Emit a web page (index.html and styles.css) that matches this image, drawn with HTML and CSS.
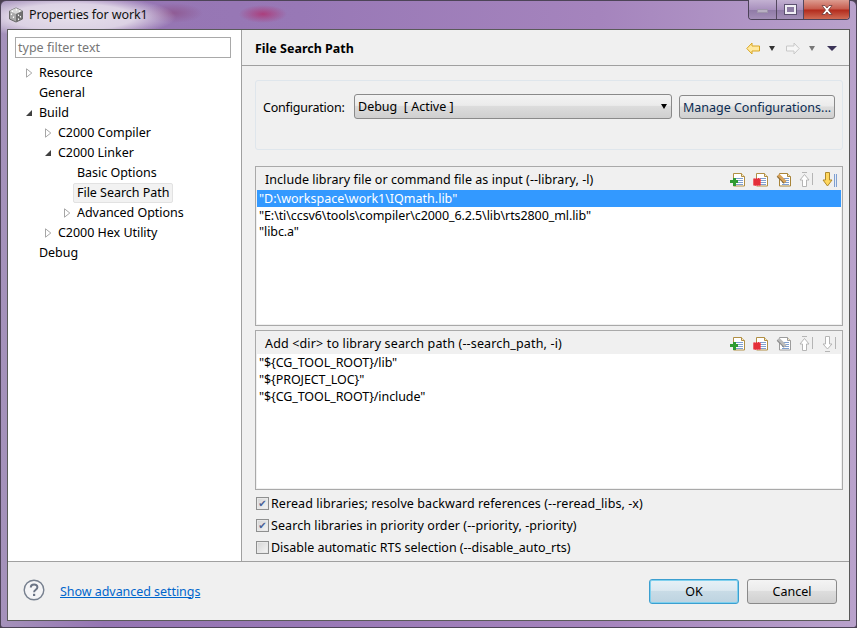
FILE: index.html
```html
<!DOCTYPE html>
<html lang="en">
<head>
<meta charset="utf-8">
<title>Properties for work1</title>
<link rel="stylesheet" href="styles.css">
</head>
<body>
<svg class="defs" width="0" height="0" aria-hidden="true">
  <symbol id="page" viewBox="0 0 16 16">
    <path d="M3.500 2.500h8l3 3v9.500h-11z" fill="#fff" stroke="currentColor"/>
    <path d="M11.500 2.500v3h3" fill="#f6e9c8" stroke="currentColor"/>
    <path d="M6 7.500h7M6 9.500h7M6 11.500h7M6 13.500h7" stroke="#7f9fd0"/>
  </symbol>
  <symbol id="tri-closed" viewBox="0 0 8 10">
    <path d="M1.500 .8v8.400L6.800 5z" fill="#fff" stroke="#a6a6a6"/>
  </symbol>
  <symbol id="tri-open" viewBox="0 0 8 10">
    <path d="M7 2v6H1z" fill="#404040"/>
  </symbol>
  <symbol id="arrow-up" viewBox="0 0 12 17">
    <path d="M3 1.500h5" stroke="#b5b5b5"/>
    <path d="M5.500 3.500 1 9h2.500v6.500h4V9H10z" fill="#fff" stroke="#b5b5b5"/>
  </symbol>
  <symbol id="arrow-down" viewBox="0 0 12 17">
    <path d="M3.500 1.500h4V9H10l-4.500 6L1 9h2.500z" fill="currentColor" stroke="#b08a2c"/>
  </symbol>
  <symbol id="arrow-down-off" viewBox="0 0 12 17">
    <path d="M3.500 1.500h4V9H10l-4.500 5L1 9h2.500z" fill="#fff" stroke="#b5b5b5"/>
    <path d="M3 16.500h5" stroke="#b5b5b5"/>
  </symbol>
</svg>

<div class="window">
  <header class="titlebar">
    <svg class="app-icon" width="16" height="16" viewBox="0 0 16 16">
      <path d="M8 1 14.500 4v8L8 15 1.500 12V4z" fill="#a8a8a8" stroke="#666"/>
      <path d="M1.500 4 8 7l6.500-3L8 1z" fill="#d8d8d8"/>
      <path d="M8 7v8l6.500-3V4z" fill="#6f6f6f"/>
      <path d="M4 4l1 .5M8 2.500l1 .5M11 4l1 .5M3 7l1 .5M5 10l1 .5M10 8.500l1-.5M12 10l1-.5M10 12.500l1-.5" stroke="#fff" stroke-width="1.500"/>
    </svg>
    <span class="title-text">Properties for work1</span>
    <div class="win-controls">
      <span class="wc wc-min"><i class="min-glyph"></i></span>
      <span class="wc wc-max"><i class="max-glyph"></i></span>
      <span class="wc wc-close">
        <svg width="16" height="12" viewBox="0 0 16 12"><path d="M3 1.500h3l2 2.500 2-2.500h3L9.500 6 13 10.500h-3L8 8l-2 2.500H3L6.500 6z" fill="#fff" stroke="#6b3b3b" stroke-width=".8"/></svg>
      </span>
    </div>
  </header>

  <div class="client">
    <div class="main">
      <nav class="nav">
        <div class="filter">type filter text</div>
        <ul class="tree">
          <li class="row d0"><svg class="tw"><use href="#tri-closed"/></svg><span class="node">Resource</span></li>
          <li class="row d0"><span class="tw"></span><span class="node">General</span></li>
          <li class="row d0"><svg class="tw"><use href="#tri-open"/></svg><span class="node">Build</span></li>
          <li class="row d1"><svg class="tw"><use href="#tri-closed"/></svg><span class="node">C2000 Compiler</span></li>
          <li class="row d1"><svg class="tw"><use href="#tri-open"/></svg><span class="node">C2000 Linker</span></li>
          <li class="row d2"><span class="tw"></span><span class="node">Basic Options</span></li>
          <li class="row d2"><span class="tw"></span><span class="node node-selected">File Search Path</span></li>
          <li class="row d2"><svg class="tw"><use href="#tri-closed"/></svg><span class="node">Advanced Options</span></li>
          <li class="row d1"><svg class="tw"><use href="#tri-closed"/></svg><span class="node">C2000 Hex Utility</span></li>
          <li class="row d0"><span class="tw"></span><span class="node">Debug</span></li>
        </ul>
      </nav>

      <section class="content">
        <div class="page-head">
          <h1 class="page-title">File Search Path</h1>
          <div class="page-nav">
            <svg class="nav-arrow" width="14" height="13" viewBox="0 0 14 13"><path d="M.8 6.500 6 1v3h7.500v5H6v3z" fill="#ffe9a0" stroke="#d9a520"/></svg>
            <i class="caret caret-dark"></i>
            <svg class="nav-arrow nav-fwd" width="14" height="13" viewBox="0 0 14 13"><path d="M13.200 6.500 8 1v3H.5v5H8v3z" fill="#f6f6f6" stroke="#c8c8c8"/></svg>
            <i class="caret caret-grey"></i>
            <i class="caret caret-menu"></i>
          </div>
        </div>

        <div class="page-body">
          <div class="config">
            <span class="config-label">Configuration:</span>
            <div class="combo"><span class="combo-value">Debug&nbsp;&nbsp;[ Active ]</span><i class="caret caret-black"></i></div>
            <button class="btn btn-manage" type="button">Manage Configurations...</button>
          </div>

          <div class="panel">
            <div class="panel-head">
              <span class="panel-title">Include library file or command file as input (--library, -l)</span>
              <div class="tools">
                <span class="tool tool-add"><svg><use href="#page"/></svg><b class="plus"></b></span>
                <span class="tool tool-del"><svg><use href="#page"/></svg><b class="cross"></b></span>
                <span class="tool tool-edit"><svg><use href="#page"/></svg><b class="pencil"></b></span>
                <span class="tool tool-updis"><svg><use href="#arrow-up"/></svg><b class="sep"></b></span>
                <span class="tool tool-down"><svg><use href="#arrow-down"/></svg><b class="sep sep-lines"></b></span>
              </div>
            </div>
            <ul class="list">
              <li class="item item-selected">"D:\workspace\work1\IQmath.lib"</li>
              <li class="item">"E:\ti\ccsv6\tools\compiler\c2000_6.2.5\lib\rts2800_ml.lib"</li>
              <li class="item">"libc.a"</li>
            </ul>
          </div>

          <div class="panel panel-second">
            <div class="panel-head">
              <span class="panel-title">Add &lt;dir&gt; to library search path (--search_path, -i)</span>
              <div class="tools">
                <span class="tool tool-add"><svg><use href="#page"/></svg><b class="plus"></b></span>
                <span class="tool tool-del"><svg><use href="#page"/></svg><b class="cross"></b></span>
                <span class="tool tool-off"><svg><use href="#page"/></svg><b class="pencil pencil-off"></b></span>
                <span class="tool tool-updis"><svg><use href="#arrow-up"/></svg><b class="sep"></b></span>
                <span class="tool tool-downdis"><svg><use href="#arrow-down-off"/></svg><b class="sep"></b></span>
              </div>
            </div>
            <ul class="list">
              <li class="item">"${CG_TOOL_ROOT}/lib"</li>
              <li class="item">"${PROJECT_LOC}"</li>
              <li class="item">"${CG_TOOL_ROOT}/include"</li>
            </ul>
          </div>

          <div class="checks">
            <label class="check"><span class="box box-on">✔</span>Reread libraries; resolve backward references (--reread_libs, -x)</label>
            <label class="check"><span class="box box-on">✔</span>Search libraries in priority order (--priority, -priority)</label>
            <label class="check check-tight"><span class="box"></span>Disable automatic RTS selection (--disable_auto_rts)</label>
          </div>
        </div>
      </section>
    </div>

    <footer class="footer">
      <svg class="help" width="22" height="22" viewBox="0 0 22 22">
        <circle cx="11" cy="11" r="9.800" fill="#f4f4f6" stroke="#77808f" stroke-width="1.400"/>
        <path d="M7.800 8.500c0-4 6.600-4 6.600-.2 0 2.600-3.300 2.400-3.300 5" fill="none" stroke="#6b7485" stroke-width="2"/>
        <rect x="10" y="14.800" width="2.200" height="2.200" fill="#6b7485"/>
      </svg>
      <a class="advanced" href="#">Show advanced settings</a>
      <div class="footer-buttons">
        <button class="btn btn-foot btn-default" type="button">OK</button>
        <button class="btn btn-foot" type="button">Cancel</button>
      </div>
    </footer>
  </div>
</div>
</body>
</html>
```

FILE: styles.css
```css
* { box-sizing: border-box; }
html, body { margin: 0; padding: 0; }
body {
  width: 857px;
  height: 628px;
  overflow: hidden;
  font: 12.5px/17px "Noto Sans", "Open Sans", sans-serif;
  color: #000;
  background: #4a4050;
}
.defs { position: absolute; }
ul { list-style: none; margin: 0; padding: 0; }

.window {
  width: 857px;
  height: 628px;
  padding: 0 6px 6px;
  display: flex;
  flex-direction: column;
  border-radius: 6px 6px 3px 3px;
  border: 1px solid #4d4458;
  background:
    radial-gradient(ellipse 105px 22px at 70px 16px, #e6dfeb 0%, #dcd2e4 60%, rgba(220,210,228,0) 100%),
    radial-gradient(ellipse 24px 9px at 262px 13px, #ab3f7d 0%, rgba(171,63,125,0) 100%),
    radial-gradient(ellipse 30px 10px at 172px 12px, #8f5b94 0%, rgba(143,91,148,0) 100%),
    linear-gradient(90deg, #a592bb 0%, #9575b3 12%, #9878b6 35%, #a584bd 70%, #b9a2cc 100%);
}

.titlebar {
  height: 28px;
  display: flex;
  align-items: flex-start;
  flex: none;
}
.app-icon { margin: 6px 0 0 1px; flex: none; }
.title-text { margin: 5px 0 0 5px; font-size: 12.5px; line-height: 17px; color: #111; letter-spacing: -.1px; }
.win-controls {
  margin-left: auto;
  display: flex;
  height: 20px;
  margin-top: -1px;
  border: 1px solid #4c4258;
  border-top: 0;
  border-radius: 0 0 4px 4px;
  overflow: hidden;
}
.wc { display: flex; align-items: center; justify-content: center; border-right: 1px solid #54485f; }
.wc-min { width: 28px; background: linear-gradient(#c3b1d2, #a890bd 50%, #8f7aa6 52%, #a48fb8); }
.wc-max { width: 27px; background: linear-gradient(#c3b1d2, #a890bd 50%, #8f7aa6 52%, #a48fb8); }
.wc-close { width: 45px; border-right: 0; background: linear-gradient(#dd9c90, #c65a4c 48%, #b22a1c 52%, #cf6b55); }
.min-glyph { width: 11px; height: 4px; margin-top: 3px; background: #b8b0c2; border: 1px solid #9f95ac; }
.max-glyph { width: 11px; height: 9px; border: 2px solid #f0eef4; outline: 1px solid #5c5170; background: #8c7ba3; }

.client {
  flex: 1;
  min-height: 0;
  display: flex;
  flex-direction: column;
  border: 1px solid #5a5a5a;
  background: #f0f0f0;
}
.main { flex: 1; min-height: 0; display: flex; border-bottom: 1px solid #a0a0a0; }

.nav {
  width: 234px;
  flex: none;
  background: #fff;
  border-right: 1px solid #a0a0a0;
  padding: 7px 0 0 7px;
}
.filter {
  width: 216px;
  height: 21px;
  border: 1px solid #a9a9a9;
  padding: 1px 2px;
  color: #777;
  line-height: 17px;
}
.tree { margin-top: 5px; }
.row { height: 20px; display: flex; align-items: center; }
.d0 { padding-left: 10px; }
.d1 { padding-left: 29px; }
.d2 { padding-left: 48px; }
.tw { width: 8px; height: 10px; flex: none; margin-right: 6px; }
.node { height: 20px; line-height: 20px; padding: 0 3px 0 0; letter-spacing: -.03px; }
.node-selected {
  margin-left: -4px;
  padding: 0 3px;
  line-height: 18px;
  background: #f2f2f2;
  border: 1px solid #e2e2e2;
  border-radius: 2px;
}

.content { flex: 1; min-width: 0; display: flex; flex-direction: column; }
.page-head {
  height: 36px;
  flex: none;
  display: flex;
  align-items: center;
  border-bottom: 1px solid #a0a0a0;
  padding: 2px 12px 0 13px;
}
.page-title { margin: 0; font-size: 12.5px; line-height: 17px; font-weight: 700; }
.page-nav { margin-left: auto; display: flex; align-items: center; }
.nav-arrow { display: block; margin-right: 9px; }
.nav-fwd { margin-left: 11px; }
.caret { display: block; width: 0; height: 0; border-style: solid; border-color: transparent; border-width: 5px 3.500px 0; }
.caret-dark { border-top-color: #333; }
.caret-grey { border-top-color: #777; }
.caret-menu { margin-left: 12px; border-width: 5px 5px 0; border-top-color: #3b3357; }
.caret-black { border-top-color: #000; margin-left: auto; margin-right: 1px; }

.page-body { flex: 1; min-height: 0; padding: 14px 6px 0 13px; }
.config {
  height: 70px;
  display: flex;
  align-items: flex-start;
  padding: 13px 7px 0 7px;
  border: 1px solid #dfe6ec;
  border-radius: 3px;
}
.config-label { margin-top: 5px; width: 91px; flex: none; letter-spacing: -.2px; }
.combo {
  width: 318px;
  height: 25px;
  flex: none;
  display: flex;
  align-items: center;
  padding: 0 3px 0 3px;
  border: 1px solid #8a8a8a;
  border-radius: 3px;
  background: linear-gradient(#f3f3f3, #ebebeb 45%, #dcdcdc 50%, #cfcfcf);
}
.btn {
  font: inherit;
  color: #000;
  padding: 0;
  border: 1px solid #8a8a8a;
  border-radius: 3px;
  background: linear-gradient(#f4f4f4, #ebebeb 45%, #dddddd 50%, #d0d0d0);
}
.btn-manage { margin-left: 7px; width: 156px; height: 24px; margin-top: 1px; color: #0c2c52; }

.panel {
  margin-top: 16px;
  height: 160px;
  border: 1px solid #a9a9a9;
  padding: 0 1px 1px;
  display: flex;
  flex-direction: column;
  background: #f0f0f0;
}
.panel-second { margin-top: 4px; }
.panel-head { height: 23px; flex: none; display: flex; align-items: center; padding: 1px 3px 0 8px; }
.panel-title { flex: 1; padding-top: 1px; letter-spacing: .05px; }
.panel-second .panel-title { letter-spacing: .15px; }
.tools { display: flex; gap: 7px; }
.tool { position: relative; width: 16px; height: 17px; display: block; }
.tool svg { position: absolute; left: 0; top: 0; width: 16px; height: 16px; }
.tool-add, .tool-del { color: #b18f45; }
.tool-edit { color: #a9853a; }
.tool-off { color: #9c9c9c; }
.tool-updis svg, .tool-down svg, .tool-downdis svg { width: 12px; height: 17px; }
.tool-down { color: #ffd75e; }
.plus, .cross, .pencil, .sep { position: absolute; display: block; }
.plus { left: 0; bottom: 2px; width: 8px; height: 8px;
  background:
    linear-gradient(#2f9b32, #2f9b32) center / 8px 3px no-repeat,
    linear-gradient(#2f9b32, #2f9b32) center / 3px 8px no-repeat; }
.cross { left: 0; bottom: 2px; width: 8px; height: 8px; border-radius: 2px;
  background: #e4303a; outline: 1px dotted #f59aa0; outline-offset: -1px; }
.pencil { left: 1px; top: 6px; width: 10px; height: 3px; transform: rotate(45deg); background: #d8a35b; box-shadow: 0 1px 0 #8b6a32; }
.pencil-off { background: #bbb; box-shadow: 0 1px 0 #888; }
.sep { left: 13px; top: 2px; width: 1px; height: 12px; background: #b5b5b5; }
.sep-lines { left: 12px; height: 13px; top: 3px; background: #7f9fd0; box-shadow: 1px 0 0 #e4ecf7, 2px 0 0 #7f9fd0; }

.list { flex: 1; min-height: 0; background: #fff; }
.item { height: 16.700px; line-height: 18px; padding-left: 2px; white-space: nowrap; letter-spacing: -.09px; }
.panel-second .item { height: 17px; }
.item-selected { background: #3399ff; color: #fff; letter-spacing: 0; }

.checks { margin-top: 2px; letter-spacing: .08px; }
.check { height: 22px; display: flex; align-items: center; }
.check-tight { letter-spacing: -.02px; }
.box {
  width: 13px;
  height: 13px;
  flex: none;
  margin: 0 2px 0 1px;
  border: 1px solid #8e8f8f;
  background: linear-gradient(135deg, #d4d4d4, #f5f5f5);
  box-shadow: inset 0 0 0 1px #e8e8e8;
  font: 700 10px/11px "DejaVu Sans", sans-serif;
  color: #4a5f97;
  text-align: center;
}

.footer {
  height: 58px;
  flex: none;
  display: flex;
  align-items: center;
  padding: 0 12px 0 15px;
}
.help { flex: none; display: block; margin-bottom: 2px; }
.advanced { margin-left: 15px; color: #0066cc; letter-spacing: -.05px; }
.footer-buttons { margin-left: auto; display: flex; gap: 8px; margin-top: 1px; }
.btn-foot { width: 90px; height: 25px; }
.btn-default {
  border-color: #3c9fd0;
  box-shadow: inset 0 0 0 1px #7fd0ee;
  background: linear-gradient(#e6f1f7, #dbe8f0 45%, #c8dbe6 50%, #bdd3e0);
}
```
